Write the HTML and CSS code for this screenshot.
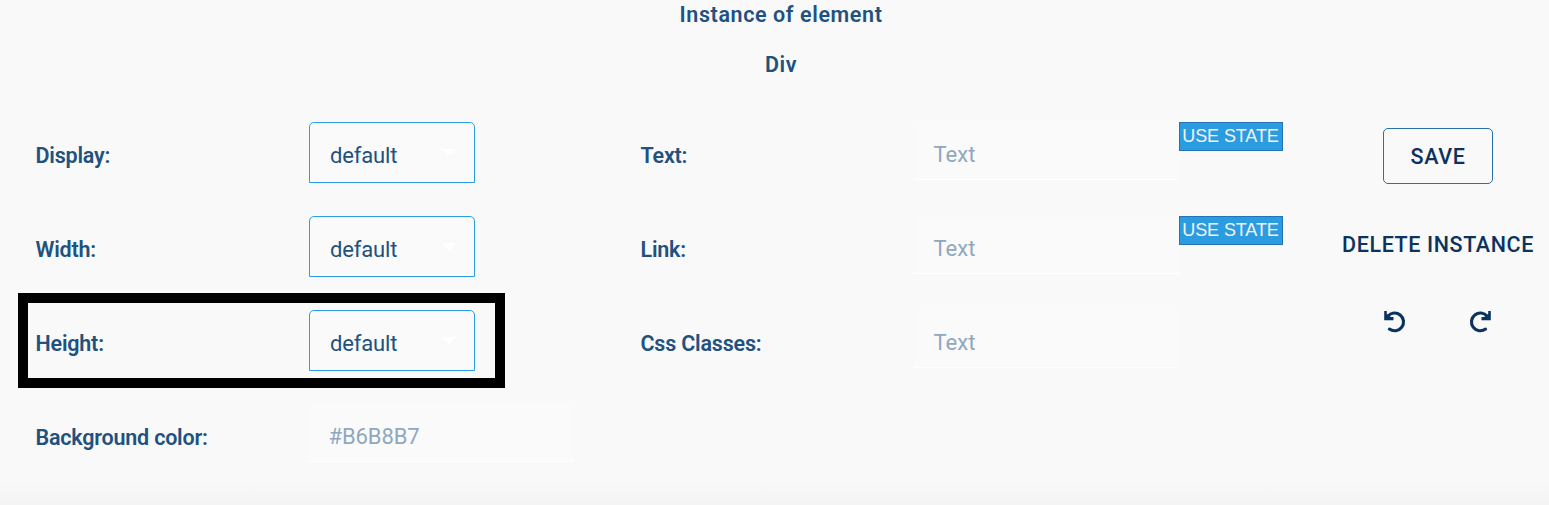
FILE: index.html
```html
<!DOCTYPE html>
<html lang="en">
<head>
<meta charset="utf-8">
<title>Instance of element</title>
<link rel="stylesheet" href="styles.css">
</head>
<body>
<main class="panel">
  <header class="heading">
    <div><span>Instance of element</span></div>
    <div><span>Div</span></div>
  </header>
  <div class="content">
    <section class="column">
      <div class="row"><label class="label"><span>Display:</span></label>
        <div class="select"><span>default</span><svg class="caret" viewBox="0 0 14 7"><path d="M0 0h14L7 7z"/></svg></div></div>
      <div class="row"><label class="label"><span>Width:</span></label>
        <div class="select"><span>default</span><svg class="caret" viewBox="0 0 14 7"><path d="M0 0h14L7 7z"/></svg></div></div>
      <div class="row highlighted"><label class="label"><span>Height:</span></label>
        <div class="select"><span>default</span><svg class="caret" viewBox="0 0 14 7"><path d="M0 0h14L7 7z"/></svg></div></div>
      <div class="row"><label class="label"><span>Background color:</span></label>
        <div class="field color"><span>#B6B8B7</span></div></div>
    </section>
    <section class="column">
      <div class="row"><label class="label"><span>Text:</span></label>
        <div class="field"><span>Text</span></div><button class="state"><span>USE STATE</span></button></div>
      <div class="row"><label class="label"><span>Link:</span></label>
        <div class="field"><span>Text</span></div><button class="state"><span>USE STATE</span></button></div>
      <div class="row"><label class="label"><span>Css Classes:</span></label>
        <div class="field"><span>Text</span></div></div>
    </section>
    <aside class="actions">
      <button class="save"><span>SAVE</span></button>
      <button class="delete"><span>DELETE INSTANCE</span></button>
      <div class="history">
        <svg class="icon" viewBox="0 0 24 24"><path class="arc" d="M4.8 6.2A8.9 8.9 0 1 1 6.4 19.1"/><path class="head" d="M1.2 1h2.6v3l4 3H10.5v3.2H1.2z"/></svg>
        <svg class="icon redo" viewBox="0 0 24 24"><path class="arc" d="M4.8 6.2A8.9 8.9 0 1 1 6.4 19.1"/><path class="head" d="M1.2 1h2.6v3l4 3H10.5v3.2H1.2z"/></svg>
      </div>
    </aside>
  </div>
</main>
</body>
</html>
```
FILE: styles.css
```css
*, *::after { box-sizing: border-box; }
body { margin: 0; background: #f9f9f9; color: #20517f; font: 22px/30px Roboto, sans-serif; }
.panel { height: 505px; overflow: hidden; background: linear-gradient(#f9f9f9 480px, #f4f4f4 505px); }
.heading { height: 122px; padding-left: 13px; text-align: center; font-size: 21.5px; font-weight: 600; letter-spacing: .6px; }
.heading div { height: 50px; }
.content { display: grid; grid-template-columns: 605px 702px 1fr; padding-left: 35.5px; }
.row { position: relative; display: flex; align-items: flex-start; height: 94px; }
.label { width: 273px; padding-top: 19px; font-size: 21.5px; font-weight: 600; letter-spacing: -.2px; white-space: nowrap; }
.select { display: flex; justify-content: space-between; align-items: center; width: 166px; height: 61px; padding: 6px 18px 0 20.5px; background: #fafafa; border: 1px solid #2b9fe2; border-radius: 5px 5px 0 0; letter-spacing: -.15px; }
.caret { width: 14px; height: 7px; margin-top: -6px; fill: #fff; }
.field { width: 265px; height: 58px; padding: 18px 20px 0; background: #fafafa; border-bottom: 1px solid #fff; color: #8ea8c0; letter-spacing: 0; }
.color { letter-spacing: -.1px; }
.state { width: 104px; height: 29px; padding: 0 0 2px; border: 1px solid #2473b5; background: #2b9ce0; color: #f3f3f3; font: 18px/22px "Liberation Sans", Arial, sans-serif; letter-spacing: -.1px; white-space: nowrap; }
.highlighted::after { content: ""; position: absolute; z-index: 1; left: -17.5px; top: -17px; width: 487px; height: 95px; border: 10px solid #000; }
.actions { display: flex; flex-direction: column; align-items: center; width: 190px; padding-top: 6px; margin-left: .5px; }
.save, .delete { padding: 1px 0 0; background: none; color: #0b3360; font: 500 21.5px/30px Roboto, sans-serif; letter-spacing: .6px; white-space: nowrap; }
.save { width: 110px; height: 56px; border: 1px solid #286fae; border-radius: 5px; }
.delete { height: 56px; margin-top: 32px; border: 0; }
.history { display: flex; justify-content: space-between; width: 110px; padding-right: 1px; margin-top: 38px; }
.icon { width: 24px; height: 24px; }
.redo { transform: scaleX(-1); }
.arc { fill: none; stroke: #0b3360; stroke-width: 3.1; stroke-linecap: round; }
.head { fill: #0b3360; }
```
